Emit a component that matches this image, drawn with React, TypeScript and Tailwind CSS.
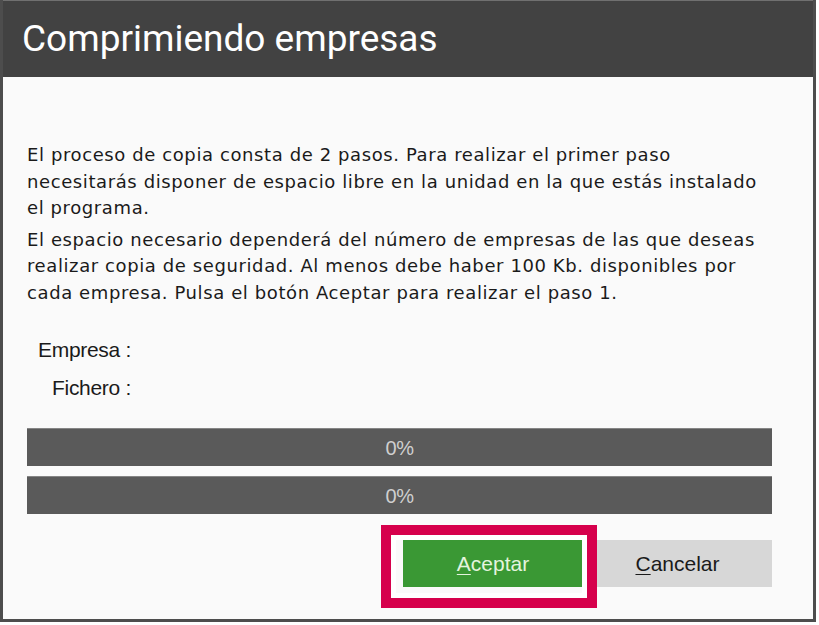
import React from "react";

const BODY_LINES_1 = [
  "El proceso de copia consta de 2 pasos. Para realizar el primer paso",
  "necesitarás disponer de espacio libre en la unidad en la que estás instalado",
  "el programa.",
];

const BODY_LINES_2 = [
  "El espacio necesario dependerá del número de empresas de las que deseas",
  "realizar copia de seguridad. Al menos debe haber 100 Kb. disponibles por",
  "cada empresa. Pulsa el botón Aceptar para realizar el paso 1.",
];

function ProgressBar({ value }: { value: number }) {
  return (
    <div className="h-[38px] bg-[#5a5a5a] border-t border-[#858585] flex items-center justify-center">
      <span className="text-[20px] leading-none text-[#cfcfcf] font-['Liberation_Sans',sans-serif] tracking-[-0.5px]">
        {value}%
      </span>
    </div>
  );
}

export default function App() {
  return (
    <div className="w-[819px] h-[625px] bg-white font-['DejaVu_Sans',sans-serif]">
      <div className="relative w-[816px] h-[622px] border-x-[3px] border-b-[3px] border-[#4d4d4d] bg-[#fafafa] flex flex-col">
        <header className="h-[77px] bg-[#424242] border-t border-[#707070] pl-[19px] flex items-center">
          <h1 className="text-[37px] leading-none text-white font-['Roboto',sans-serif] pb-[2px]">
            Comprimiendo empresas
          </h1>
        </header>

        <div className="pl-[24px] pt-[65px] text-[18px] leading-[26.5px] tracking-[0.6px] text-[#1a1a1a]">
          <p>
            {BODY_LINES_1.map((l) => (
              <span key={l} className="block whitespace-nowrap">
                {l}
              </span>
            ))}
          </p>
          <p className="mt-[5px]">
            {BODY_LINES_2.map((l) => (
              <span key={l} className="block whitespace-nowrap">
                {l}
              </span>
            ))}
          </p>
        </div>

        <div className="mt-[32px] w-[128px] flex flex-col items-end gap-[14px] text-[21px] leading-[24px] tracking-[-0.3px] text-[#1a1a1a] font-['Liberation_Sans',sans-serif]">
          <span>Empresa :</span>
          <span>Fichero :</span>
        </div>

        <div className="ml-[24px] mt-[28px] w-[745px] flex flex-col gap-[10px]">
          <ProgressBar value={0} />
          <ProgressBar value={0} />
        </div>

        <div className="mt-[26px] flex justify-end pr-[41px]">
          <button className="w-[180px] h-[47px] bg-[#3a9834] text-[#e4f4de] text-[21px] font-['Liberation_Sans',sans-serif]">
            <span className="underline underline-offset-[3px] decoration-1">A</span>ceptar
          </button>
          <button className="w-[189px] h-[47px] bg-[#d7d7d7] text-[#1a1a1a] text-[21px] font-['Liberation_Sans',sans-serif]">
            <span className="underline underline-offset-[3px] decoration-1">C</span>ancelar
          </button>
        </div>

        <div className="absolute left-[378px] top-[525px] w-[216px] h-[83px] border-[10px] border-[#d6004c] shadow-[inset_0_0_0_5px_#ffffff] pointer-events-none" />
      </div>
    </div>
  );
}
